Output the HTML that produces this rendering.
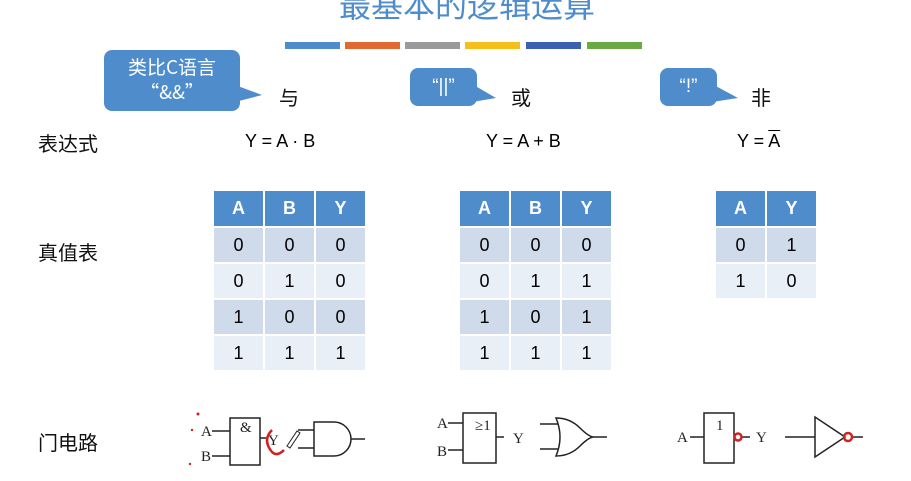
<!DOCTYPE html>
<html><head><meta charset="utf-8"><style>
body{margin:0;width:911px;height:481px;background:#fff;position:relative;overflow:hidden;font-family:"Liberation Sans","Noto Sans CJK SC",sans-serif;}
.a{position:absolute;white-space:nowrap}
.bar{position:absolute;top:42px;height:7px;width:55px}
table{position:absolute;border-collapse:separate;border-spacing:2px;font-size:18px;text-align:center}
td{width:47px;height:34px;padding:0}
th{background:#4f8ccb;color:#fff;height:33px;font-weight:bold;width:47px}
tr.d td{background:#cfdbeb}
tr.l td{background:#e9eff7}
.cn{font-family:"Noto Sans CJK SC",sans-serif;font-size:20px;color:#111}
.bub{position:absolute;background:#4f8ccb;border-radius:8px;color:#fff;text-align:center}
</style></head><body>
<div class="a" style="left:339px;top:-19px;font-size:32px;color:#4f8ccb;font-family:'Noto Sans CJK SC',sans-serif">最基本的逻辑运算</div>
<div class="bar" style="left:285px;background:#4f8ccb"></div>
<div class="bar" style="left:345px;background:#e06a30"></div>
<div class="bar" style="left:405px;background:#9a9a9a"></div>
<div class="bar" style="left:465px;background:#f5bf1c"></div>
<div class="bar" style="left:526px;background:#3a62b0"></div>
<div class="bar" style="left:587px;background:#6aaa45"></div>

<svg class="a" style="left:0;top:0" width="911" height="130">
<polygon points="235,85 262,95 235,102" fill="#4f8ccb"/>
<polygon points="472,84 496,98 472,102" fill="#4f8ccb"/>
<polygon points="712,84 738,98 712,102" fill="#4f8ccb"/>
</svg>
<div class="bub" style="left:104px;top:50px;width:136px;height:61px;font-size:19px;line-height:25px;padding-top:4px;box-sizing:border-box;font-family:'Noto Sans CJK SC',sans-serif">类比C语言<br>“&amp;&amp;”</div>
<div class="bub" style="left:410px;top:68px;width:67px;height:38px;font-size:19px;line-height:38px">“||”</div>
<div class="bub" style="left:660px;top:68px;width:57px;height:38px;font-size:19px;line-height:38px">“!”</div>
<div class="a cn" style="left:279px;top:82px">与</div>
<div class="a cn" style="left:511px;top:82px">或</div>
<div class="a cn" style="left:751px;top:82px">非</div>

<div class="a cn" style="left:38px;top:128px">表达式</div>
<div class="a cn" style="left:38px;top:237px">真值表</div>
<div class="a cn" style="left:38px;top:427px">门电路</div>
<div class="a" style="left:245px;top:131px;font-size:18px">Y = A · B</div>
<div class="a" style="left:486px;top:131px;font-size:18px">Y = A + B</div>
<div class="a" style="left:737px;top:131px;font-size:18px">Y = <span style="text-decoration:overline">A</span></div>

<table style="left:212px;top:189px"><tr><th>A</th><th>B</th><th>Y</th></tr>
<tr class="d"><td>0</td><td>0</td><td>0</td></tr><tr class="l"><td>0</td><td>1</td><td>0</td></tr>
<tr class="d"><td>1</td><td>0</td><td>0</td></tr><tr class="l"><td>1</td><td>1</td><td>1</td></tr></table>
<table style="left:458px;top:189px"><tr><th>A</th><th>B</th><th>Y</th></tr>
<tr class="d"><td>0</td><td>0</td><td>0</td></tr><tr class="l"><td>0</td><td>1</td><td>1</td></tr>
<tr class="d"><td>1</td><td>0</td><td>1</td></tr><tr class="l"><td>1</td><td>1</td><td>1</td></tr></table>
<table style="left:714px;top:189px"><tr><th>A</th><th>Y</th></tr>
<tr class="d"><td>0</td><td>1</td></tr><tr class="l"><td>1</td><td>0</td></tr></table>

<svg class="a" style="left:0;top:400px" width="911" height="81" font-family="Liberation Serif" font-size="15" fill="none" stroke="#222" stroke-width="1.5">
<g fill="#222" stroke="none"><text x="201" y="36">A</text><text x="201" y="61">B</text><text x="240" y="32">&amp;</text><text x="268" y="45">Y</text>
<text x="437" y="28">A</text><text x="437" y="56">B</text><text x="475" y="30">≥1</text><text x="513" y="43">Y</text>
<text x="677" y="42">A</text><text x="716" y="30">1</text><text x="756" y="42">Y</text></g>
<path d="M212 31h18M212 56h18M230 18h30v47h-30zM260 38h6"/>
<path d="M298 30h16M298 48h16M314 22h20a17 17 0 0 1 0 34h-20zM351 39h14"/>
<path d="M448 23h15M448 50h15M463 13h33v50h-33zM496 37h8"/>
<path d="M540 24h18M540 49h18M556 18q14 0 24 10q8 8 13 9q-5 1 -13 9q-10 10 -24 10q8 -19 0 -38zM593 37h14"/>
<path d="M690 37h14M704 13h30v50h-30zM742 37h8"/>
<path d="M785 37h30M815 17v40l30 -20zM851 37h12"/>
<g stroke="#d02020" stroke-width="2.5"><circle cx="738" cy="37" r="3.5"/><circle cx="848" cy="37" r="4"/><path d="M272 30q-10 10 0 22q5 5 12 -2"/></g>
<g fill="#d02020" stroke="none"><circle cx="198" cy="14" r="1.5"/><circle cx="192" cy="30" r="1.2"/><circle cx="190" cy="64" r="1.2"/></g>
<path d="M287 46l10 -15l3 2l-10 15z" stroke-width="1"/>
</svg>
</body></html>
